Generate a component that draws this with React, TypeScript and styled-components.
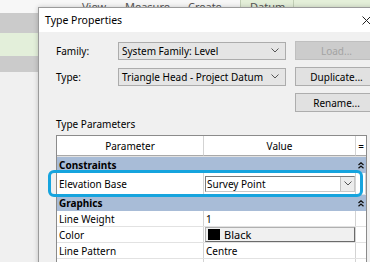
import React from 'react';
import styled, { createGlobalStyle } from 'styled-components';

const GlobalStyle = createGlobalStyle`
  body {
    margin: 0;
    font-family: "Noto Sans", sans-serif;
  }
`;

const Screen = styled.div`
  position: relative;
  width: 370px;
  height: 262px;
  overflow: hidden;
  background: #f0f0f0;
  font-size: 10px;
  color: #000;
`;

const Ribbon = styled.div`
  display: flex;
  height: 13px;
  background: #f7f7f7;
  font-size: 11px;
  line-height: 13px;
  color: #555;
`;

const Tab = styled.div<{ $w: number; $pad?: number; $green?: boolean }>`
  flex: 0 0 ${({ $w }) => $w}px;
  padding-left: ${({ $pad }) => $pad ?? 0}px;
  box-sizing: border-box;
  white-space: nowrap;
  background: ${({ $green }) => ($green ? '#e4efd9' : 'transparent')};
  border-left: ${({ $green }) => ($green ? '1px solid #c2cfb6' : 'none')};
`;

const Band = styled.div<{ $h: number; $bg: string }>`
  height: ${({ $h }) => $h}px;
  background: ${({ $bg }) => $bg};
`;

const Dialog = styled.div`
  position: absolute;
  left: 38px;
  top: 7px;
  width: 340px;
  height: 270px;
  background: #f0f0f0;
  border: 1px solid #9b9b9b;
  box-shadow: 0 0 5px rgba(0, 0, 0, 0.2);
`;

const TitleBar = styled.div`
  display: flex;
  align-items: center;
  justify-content: space-between;
  height: 24px;
  padding: 0 8px 0 6px;
  background: #fff;
  font-size: 10.5px;
`;

const Body = styled.div`
  padding: 9px 0 0 16px;
`;

const FormGrid = styled.div`
  display: grid;
  grid-template-columns: 54px 168px 83px;
  grid-auto-rows: 19px;
  column-gap: 9px;
  row-gap: 7px;
  align-items: center;
`;

const Label = styled.div`
  padding-left: 1px;
`;

const Combo = styled.div`
  display: flex;
  align-items: center;
  justify-content: space-between;
  box-sizing: border-box;
  height: 18px;
  padding: 0 6px 0 3px;
  background: #e5e5e5;
  border: 1px solid #acacac;
  white-space: nowrap;
`;

const Button = styled.div<{ $disabled?: boolean }>`
  display: flex;
  align-items: center;
  justify-content: center;
  box-sizing: border-box;
  height: 19px;
  background: ${({ $disabled }) => ($disabled ? '#cccccc' : '#e1e1e1')};
  border: 1px solid ${({ $disabled }) => ($disabled ? '#bfbfbf' : '#adadad')};
  color: ${({ $disabled }) => ($disabled ? '#a3a3a3' : '#000')};
`;

const SectionLabel = styled.div`
  margin: 5px 0 0 1px;
  line-height: 14px;
`;

const Table = styled.div`
  margin: 4px 0 0 1px;
  width: 309px;
  background: #fff;
  border: 1px solid #8b8b8b;
`;

const Row = styled.div<{ $h: number }>`
  position: relative;
  display: grid;
  grid-template-columns: 147px 152px 1fr;
  height: ${({ $h }) => $h}px;
  box-sizing: border-box;
  border-bottom: 1px solid #e2e2e2;
`;

const HeadCell = styled.div`
  display: flex;
  align-items: center;
  justify-content: center;
  border-right: 1px solid #d3d3d3;
  border-bottom: 1px solid #a9a9a9;
  &:last-child {
    border-right: none;
  }
`;

const Cell = styled.div`
  display: flex;
  align-items: center;
  padding-left: 2px;
  white-space: nowrap;
  overflow: hidden;
  border-right: 1px solid #d3d3d3;
  &:last-child {
    border-right: none;
  }
`;

const ValueCell = styled(Cell)`
  padding-left: 1px;
  padding-right: 0;
`;

const Group = styled.div`
  display: flex;
  align-items: center;
  justify-content: space-between;
  height: 16px;
  padding: 0 2px 0 2px;
  background: #a8bcd7;
  font-weight: 700;
`;

const Dropdown = styled.div`
  display: flex;
  align-items: center;
  box-sizing: border-box;
  width: 100%;
  height: 16px;
  background: #fff;
  border: 1px solid #7a7a7a;
  border-right-color: #c8c8c8;
  border-bottom-color: #c8c8c8;
`;

const DropText = styled.div`
  flex: 1;
  padding-left: 1px;
`;

const DropButton = styled.div`
  display: flex;
  align-items: center;
  justify-content: center;
  width: 13px;
  height: 100%;
  background: #ececec;
  border-left: 1px solid #c0c0c0;
`;

const ColorButton = styled.div`
  display: flex;
  align-items: center;
  gap: 4px;
  box-sizing: border-box;
  width: 100%;
  height: 15px;
  padding-left: 2px;
  background: #f0f0f0;
  border: 1px solid #b0b0b0;
  border-right-color: #6b6b6b;
  border-bottom-color: #6b6b6b;
  font-size: 11px;
`;

const Swatch = styled.span`
  width: 12px;
  height: 11px;
  background: #000;
`;

const Highlight = styled.div`
  position: absolute;
  top: -3px;
  bottom: -3px;
  left: -9px;
  right: 3px;
  border: 3px solid #16a4de;
  border-radius: 6px;
  pointer-events: none;
`;

const Chevron = () => (
  <svg width="8" height="5" viewBox="0 0 8 5">
    <polyline points="0.5,0.5 4,4 7.5,0.5" fill="none" stroke="#555" strokeWidth="1" />
  </svg>
);

const CloseIcon = () => (
  <svg width="9" height="9" viewBox="0 0 9 9">
    <path d="M0.5 0.5 L8.5 8.5 M8.5 0.5 L0.5 8.5" stroke="#222" strokeWidth="1" />
  </svg>
);

const Collapse = () => (
  <svg width="6" height="7" viewBox="0 0 6 7">
    <path d="M0.5 3 L3 0.8 L5.5 3 M0.5 6.3 L3 4.1 L5.5 6.3" fill="none" stroke="#111" strokeWidth="1.3" />
  </svg>
);

const rows = [
  { name: 'Line Weight', value: '1' },
  { name: 'Color', value: 'Black', color: true },
  { name: 'Line Pattern', value: 'Centre' },
  { name: 'Symbol', value: 'Annotation Head : Filled Arrow' },
];

const App = () => (
  <Screen>
    <GlobalStyle />
    <Ribbon>
      <Tab $w={82} />
      <Tab $w={43}>View</Tab>
      <Tab $w={63}>Measure</Tab>
      <Tab $w={52}>Create</Tab>
      <Tab $w={53} $pad={9} $green>Datum</Tab>
      <Tab $w={77} $green />
    </Ribbon>
    <Band $h={20} $bg="#cbcbcb" />
    <Band $h={23} $bg="#e3efda" />
    <Band $h={16} $bg="#cbcbcb" />

    <Dialog>
      <TitleBar>
        <span>Type Properties</span>
        <CloseIcon />
      </TitleBar>
      <Body>
        <FormGrid>
          <Label>Family:</Label>
          <Combo>
            System Family: Level
            <Chevron />
          </Combo>
          <Button $disabled>Load...</Button>

          <Label>Type:</Label>
          <Combo>
            Triangle Head - Project Datum
            <Chevron />
          </Combo>
          <Button>Duplicate...</Button>

          <span />
          <span />
          <Button>Rename...</Button>
        </FormGrid>

        <SectionLabel>Type Parameters</SectionLabel>

        <Table>
          <Row $h={21}>
            <HeadCell>Parameter</HeadCell>
            <HeadCell>Value</HeadCell>
            <HeadCell>=</HeadCell>
          </Row>
          <Group>
            Constraints
            <Collapse />
          </Group>
          <Row $h={22}>
            <Cell>Elevation Base</Cell>
            <ValueCell>
              <Dropdown>
                <DropText>Survey Point</DropText>
                <DropButton>
                  <Chevron />
                </DropButton>
              </Dropdown>
            </ValueCell>
            <Cell />
            <Highlight />
          </Row>
          <Group>
            Graphics
            <Collapse />
          </Group>
          {rows.map((r) => (
            <Row key={r.name} $h={16}>
              <Cell>{r.name}</Cell>
              {r.color ? (
                <ValueCell>
                  <ColorButton>
                    <Swatch />
                    {r.value}
                  </ColorButton>
                </ValueCell>
              ) : (
                <Cell>{r.value}</Cell>
              )}
              <Cell />
            </Row>
          ))}
        </Table>
      </Body>
    </Dialog>
  </Screen>
);

export default App;
